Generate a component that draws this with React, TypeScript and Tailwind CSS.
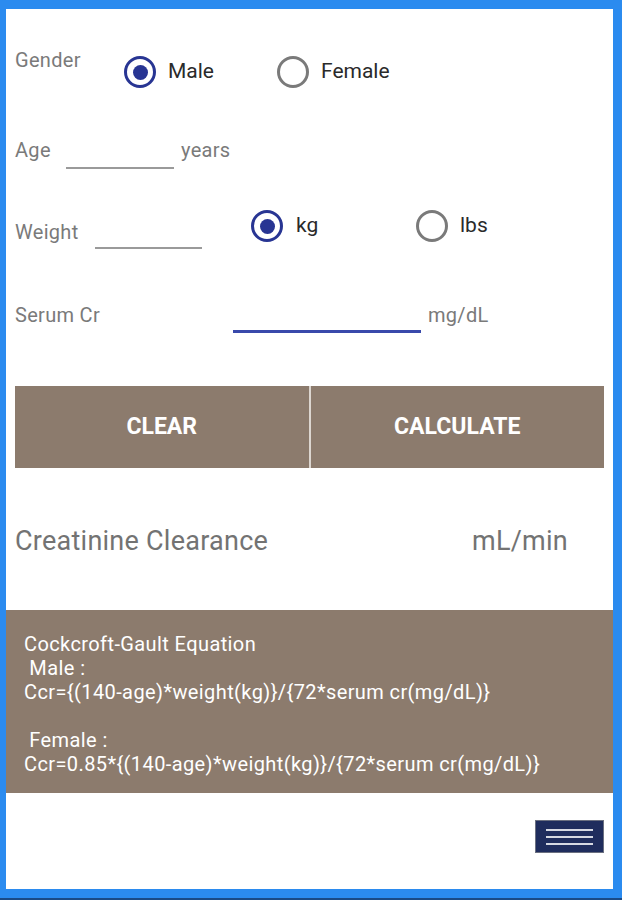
import React, { useState } from "react";

const FONT = { fontFamily: "Roboto, 'Noto Sans', Arial, sans-serif" };

function Radio({ checked, onClick }: { checked: boolean; onClick: () => void }) {
  return (
    <button
      type="button"
      onClick={onClick}
      className={`w-[32px] h-[32px] shrink-0 rounded-full border-[3px] flex items-center justify-center ${
        checked ? "border-[#283593]" : "border-[#7a7a7a]"
      }`}
    >
      {checked && <span className="w-[15px] h-[15px] rounded-full bg-[#283593]" />}
    </button>
  );
}

export default function App() {
  const [gender, setGender] = useState("male");
  const [unit, setUnit] = useState("kg");

  return (
    <div
      style={FONT}
      className="w-[622px] h-[900px] bg-[#2b8bef] pt-[9px] pl-[6px] pr-[9px] pb-[9px] border-b-[2px] border-[#1a4a86] flex"
    >
      <div className="flex-1 bg-white flex flex-col pl-[9px]">
        {/* Gender */}
        <div className="flex items-start mt-[39px] h-[40px]">
          <span className="w-[109px] text-[20px] tracking-[0.3px] leading-[24px] text-[#7a7a7a]">Gender</span>
          <div className="flex items-center mt-[8px] w-[153px]">
            <Radio checked={gender === "male"} onClick={() => setGender("male")} />
            <span className="ml-3 text-[21px] text-[#2a2a2a]">Male</span>
          </div>
          <div className="flex items-center mt-[8px]">
            <Radio checked={gender === "female"} onClick={() => setGender("female")} />
            <span className="ml-3 text-[21px] text-[#2a2a2a]">Female</span>
          </div>
        </div>

        {/* Age */}
        <div className="flex items-start mt-[50px]">
          <span className="w-[51px] text-[20px] tracking-[0.3px] leading-[24px] text-[#7a7a7a]">Age</span>
          <div className="w-[108px] h-[31px] border-b-2 border-[#9a9a9a]" />
          <span className="ml-[7px] text-[20px] tracking-[0.3px] leading-[24px] text-[#7a7a7a]">years</span>
        </div>

        {/* Weight */}
        <div className="flex items-start mt-[41px]">
          <span className="w-[80px] mt-[10px] text-[20px] tracking-[0.3px] leading-[24px] text-[#7a7a7a]">Weight</span>
          <div className="w-[107px] h-[39px] border-b-2 border-[#9a9a9a]" />
          <div className="flex items-center ml-[49px] w-[165px]">
            <Radio checked={unit === "kg"} onClick={() => setUnit("kg")} />
            <span className="ml-[13px] text-[21px] text-[#2a2a2a]">kg</span>
          </div>
          <div className="flex items-center">
            <Radio checked={unit === "lbs"} onClick={() => setUnit("lbs")} />
            <span className="ml-3 text-[21px] text-[#2a2a2a]">lbs</span>
          </div>
        </div>

        {/* Serum Cr */}
        <div className="flex items-start mt-[54px]">
          <span className="w-[218px] text-[20px] tracking-[0.3px] leading-[24px] text-[#7a7a7a]">Serum Cr</span>
          <div className="w-[188px] h-[30px] border-b-[3px] border-[#3949ab]" />
          <span className="ml-[7px] text-[20px] tracking-[0.3px] leading-[24px] text-[#7a7a7a]">mg/dL</span>
        </div>

        {/* Buttons */}
        <div className="flex mt-[53px] mr-[9px] h-[82px] gap-[2px] bg-[#dcd6d0]">
          <button className="flex-1 bg-[#8c7b6d] text-white text-[23px] font-bold">
            CLEAR
          </button>
          <button className="flex-1 bg-[#8c7b6d] text-white text-[23px] font-bold">
            CALCULATE
          </button>
        </div>

        {/* Result */}
        <div className="flex items-center mt-[58px] h-[30px]">
          <span className="text-[27px] tracking-[0.25px] text-[#737373]">Creatinine Clearance</span>
          <span className="ml-auto mr-[45px] text-[27px] tracking-[0.25px] text-[#737373]">mL/min</span>
        </div>

        {/* Equation */}
        <div className="-ml-[9px] mt-[54px] h-[183px] bg-[#8c7b6d] pl-[18px] pt-[22px] text-white text-[20px] tracking-[0.4px] leading-[24px] whitespace-pre">
          <div>Cockcroft-Gault Equation</div>
          <div> Male :</div>
          <div>{"Ccr={(140-age)*weight(kg)}/{72*serum cr(mg/dL)}"}</div>
          <div>&nbsp;</div>
          <div> Female :</div>
          <div>{"Ccr=0.85*{(140-age)*weight(kg)}/{72*serum cr(mg/dL)}"}</div>
        </div>

        {/* Menu */}
        <div className="flex justify-end mt-[27px] mr-[9px]">
          <button className="w-[69px] h-[33px] bg-[#1f2d5d] border border-[#6b7080] flex flex-col items-center justify-center gap-[5px]">
            <span className="w-[47px] h-[2px] bg-[#d6d9e2]" />
            <span className="w-[47px] h-[2px] bg-[#d6d9e2]" />
            <span className="w-[47px] h-[2px] bg-[#d6d9e2]" />
          </button>
        </div>
      </div>
    </div>
  );
}
